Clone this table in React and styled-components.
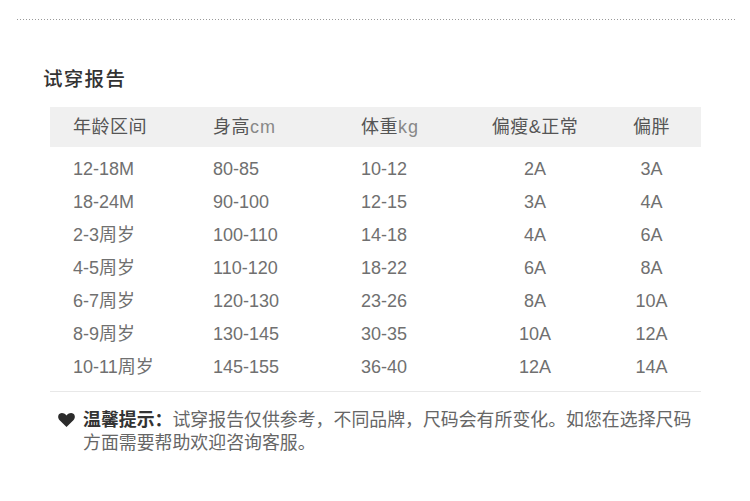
import React from 'react';
import styled, { createGlobalStyle } from 'styled-components';

const GlobalStyle = createGlobalStyle`
  html, body {
    margin: 0;
    padding: 0;
    background: #ffffff;
  }
  body {
    font-family: "Liberation Sans", "Noto Sans CJK SC", sans-serif;
    -webkit-font-smoothing: antialiased;
  }
`;

const Page = styled.div`
  width: 750px;
  height: 501px;
  box-sizing: border-box;
  padding-top: 19px;
  background: #fff;
`;

const Dotted = styled.div`
  margin: 0 15px 0 17px;
  height: 1px;
  background-image: repeating-linear-gradient(
    to right,
    #9a9a9a 0,
    #9a9a9a 1px,
    transparent 1px,
    transparent 3px
  );
`;

const Title = styled.h2`
  margin: 47px 0 0 43px;
  font-family: "Noto Sans CJK SC", sans-serif;
  font-size: 19.5px;
  font-weight: 500;
  letter-spacing: 1.3px;
  line-height: 22px;
  color: #333;
`;

const Table = styled.div`
  margin: 18px 0 0 50px;
  width: 651px;
`;

const cols = '140px 148px 136px 122px 105px';

const HeadRow = styled.div`
  display: grid;
  grid-template-columns: ${cols};
  height: 40px;
  align-items: center;
  background: #f0f0f0;
`;

const Body = styled.div`
  padding-top: 5px;
  padding-bottom: 8px;
  border-bottom: 1px solid #e8e8e8;
`;

const Row = styled.div`
  display: grid;
  grid-template-columns: ${cols};
  height: 33px;
  align-items: center;
`;

const Cell = styled.div`
  font-family: "Liberation Sans", "Noto Sans CJK SC", sans-serif;
  font-size: 18px;
  line-height: 20px;
  height: 20px;
  color: ${({ $head }) => ($head ? '#555' : '#707070')};
  text-align: ${({ $center }) => ($center ? 'center' : 'left')};
  padding-left: ${({ $center, $pad }) => ($center ? `${$pad || 0}px` : '23px')};
  white-space: nowrap;
  letter-spacing: ${({ $head }) => ($head ? '0.5px' : '0')};
`;

const Unit = styled.span`
  color: #888;
  letter-spacing: 1px;
`;

const Tip = styled.div`
  display: flex;
  align-items: flex-start;
  margin: 15px 0 0 58px;
`;

const Heart = styled.svg`
  flex: none;
  width: 17px;
  height: 14px;
  margin-top: 6px;
  margin-right: 8px;
`;

const TipText = styled.p`
  margin: 0;
  width: 618px;
  font-family: "Noto Sans CJK SC", sans-serif;
  font-size: 17.9px;
  line-height: 23px;
  color: #666;
`;

const Strong = styled.span`
  font-weight: 700;
  color: #333;
`;

const rows = [
  ['12-18M', '80-85', '10-12', '2A', '3A'],
  ['18-24M', '90-100', '12-15', '3A', '4A'],
  ['2-3周岁', '100-110', '14-18', '4A', '6A'],
  ['4-5周岁', '110-120', '18-22', '6A', '8A'],
  ['6-7周岁', '120-130', '23-26', '8A', '10A'],
  ['8-9周岁', '130-145', '30-35', '10A', '12A'],
  ['10-11周岁', '145-155', '36-40', '12A', '14A'],
];

export default function App() {
  return (
    <Page>
      <GlobalStyle />
      <Dotted />
      <Title>试穿报告</Title>
      <Table>
        <HeadRow>
          <Cell $head>年龄区间</Cell>
          <Cell $head>身高<Unit>cm</Unit></Cell>
          <Cell $head>体重<Unit>kg</Unit></Cell>
          <Cell $head $center>偏瘦&amp;正常</Cell>
          <Cell $head $center $pad={6}>偏胖</Cell>
        </HeadRow>
        <Body>
          {rows.map((r) => (
            <Row key={r[0]}>
              <Cell>{r[0]}</Cell>
              <Cell>{r[1]}</Cell>
              <Cell>{r[2]}</Cell>
              <Cell $center>{r[3]}</Cell>
              <Cell $center $pad={6}>{r[4]}</Cell>
            </Row>
          ))}
        </Body>
      </Table>
      <Tip>
        <Heart viewBox="0 0 24 20">
          <path
            d="M12 20 L2.2 10.4 C-0.6 7.6 -0.6 3.2 2.2 1.2 C4.8 -0.7 8.6 -0.2 12 3.6 C15.4 -0.2 19.2 -0.7 21.8 1.2 C24.6 3.2 24.6 7.6 21.8 10.4 Z"
            fill="#2b2b2b"
          />
        </Heart>
        <TipText>
          <Strong>温馨提示：</Strong>试穿报告仅供参考，不同品牌，尺码会有所变化。如您在选择尺码方面需要帮助欢迎咨询客服。
        </TipText>
      </Tip>
    </Page>
  );
}
